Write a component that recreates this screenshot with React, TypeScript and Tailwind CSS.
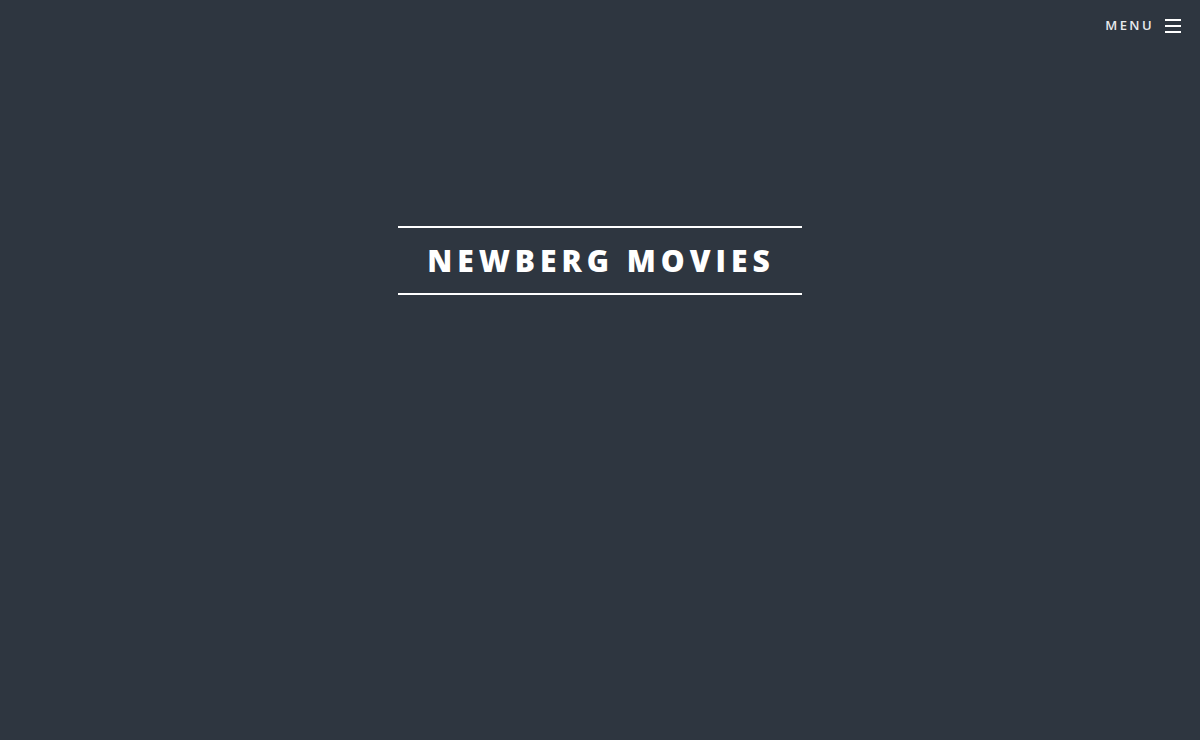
export default function App() {
  return (
    <div className="min-h-screen w-full bg-[#2e3640] font-['Open_Sans',sans-serif] text-white relative">
      {/* top right menu */}
      <div className="absolute right-[19px] top-[16px] flex items-center gap-[11px]">
        <span className="text-[13px] font-semibold tracking-[2.4px] text-[#e8eaed]">MENU</span>
        <div className="flex flex-col gap-[4px] w-[16px]">
          <div className="h-[2px] bg-white"></div>
          <div className="h-[2px] bg-white"></div>
          <div className="h-[2px] bg-white"></div>
        </div>
      </div>

      <div className="flex justify-center pt-[226px]">
        <div className="w-[404px] h-[69px] border-y-2 border-white flex items-center justify-center">
          <h1 className="text-[30px] font-extrabold tracking-[5px] pl-[2px] leading-none">NEWBERG MOVIES</h1>
        </div>
      </div>
    </div>
  )
}
